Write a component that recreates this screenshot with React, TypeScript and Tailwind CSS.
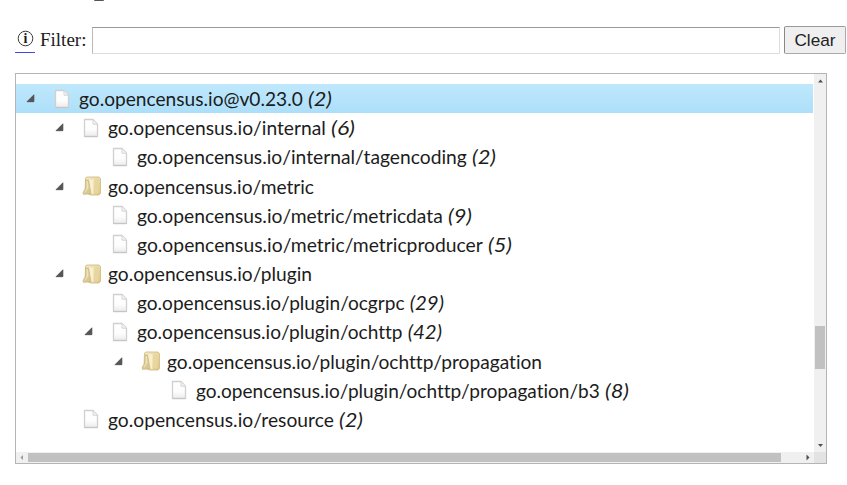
import React from 'react';

type Node = { depth: number; open?: boolean; folder?: boolean; name: string; count?: number; selected?: boolean; width: number };

const rows: Node[] = [
  { depth: 0, open: true, name: 'go.opencensus.io@v0.23.0', count: 2, selected: true, width: 253 },
  { depth: 1, open: true, name: 'go.opencensus.io/internal', count: 6, width: 247 },
  { depth: 2, name: 'go.opencensus.io/internal/tagencoding', count: 2, width: 359 },
  { depth: 1, open: true, folder: true, name: 'go.opencensus.io/metric', width: 206 },
  { depth: 2, name: 'go.opencensus.io/metric/metricdata', count: 9, width: 335 },
  { depth: 2, name: 'go.opencensus.io/metric/metricproducer', count: 5, width: 375 },
  { depth: 1, open: true, folder: true, name: 'go.opencensus.io/plugin', width: 204 },
  { depth: 2, name: 'go.opencensus.io/plugin/ocgrpc', count: 29, width: 307 },
  { depth: 2, open: true, name: 'go.opencensus.io/plugin/ochttp', count: 42, width: 305 },
  { depth: 3, open: true, folder: true, name: 'go.opencensus.io/plugin/ochttp/propagation', width: 375 },
  { depth: 4, name: 'go.opencensus.io/plugin/ochttp/propagation/b3', count: 8, width: 433 },
  { depth: 1, name: 'go.opencensus.io/resource', count: 2, width: 255 },
];

function PageIcon() {
  return (
    <svg width="16" height="20" viewBox="0 0 16 20" className="block">
      <defs>
        <linearGradient id="paper" x1="0" y1="0" x2="0" y2="1">
          <stop offset="0" stopColor="#ffffff" />
          <stop offset="0.6" stopColor="#fdfdfd" />
          <stop offset="1" stopColor="#ebebeb" />
        </linearGradient>
      </defs>
      <path d="M1.5 1.5H10L14.5 6.2V18.5H1.5Z" fill="url(#paper)" stroke="#d0d0d0" strokeWidth="1.3" strokeLinejoin="round" />
      <path d="M10 1.8V6.2H14.3" fill="#f4f4f4" stroke="#d4d4d4" />
      <path d="M1.5 18.5H14.5" stroke="#c5c5c5" />
    </svg>
  );
}

function FolderIcon() {
  return (
    <svg width="20" height="20" viewBox="0 0 20 20" className="block">
      <defs>
        <linearGradient id="manila" x1="0" y1="0" x2="1" y2="1">
          <stop offset="0" stopColor="#f5ebc8" />
          <stop offset="1" stopColor="#dcc588" />
        </linearGradient>
      </defs>
      <path d="M3.5 2L5 1H17L18.5 2.5V17.5L17 19H9L3 17Z" fill="url(#manila)" stroke="#d3bf86" strokeWidth="0.9" strokeLinejoin="round" />
      <path d="M12.5 3H16.5V16.5L12.5 18Z" fill="#e8d69e" />
      <path d="M7 3.5H11.5V18.5L8.5 17Z" fill="#f8efd0" />
      <path d="M4 4H6.5L9 17.5L1.5 18.5L1 16.5L3.5 12.5Z" fill="#d9c78f" stroke="#c8b57c" strokeWidth="0.6" strokeLinejoin="round" />
      <path d="M4.5 5H6L6.5 12L3.5 16.5H2.5L4.5 12.5Z" fill="#eee2ba" />
    </svg>
  );
}

function Label({ node }: { node: Node }) {
  const countWidth = node.count === undefined ? 0 : node.count > 9 ? 34.3 : 24;
  const nameWidth = node.count === undefined ? node.width : node.width - countWidth - 5.2;
  return (
    <svg width={node.width + 6} height="29" className="block shrink-0 overflow-visible fill-[#1c1c1c] font-[Lato,sans-serif] text-[19px] [font-variant-ligatures:none]">
      <text x="0" y="21.6" textLength={nameWidth} lengthAdjust="spacingAndGlyphs">{node.name}</text>
      {node.count !== undefined && (
        <text x={node.width - countWidth} y="21.6" textLength={countWidth} lengthAdjust="spacingAndGlyphs" className="italic">{`(${node.count})`}</text>
      )}
    </svg>
  );
}

function Row({ node }: { node: Node }) {
  return (
    <div className={'flex h-[29.18px] items-center ' + (node.selected ? 'bg-linear-to-b from-[#bfe8fc] to-[#addffa]' : '')}>
      <div className="shrink-0" style={{ width: node.depth * 29.2 }} />
      <div className="w-[37px] shrink-0 pl-[10px]">
        {node.open && (
          <svg width="9" height="9" viewBox="0 0 9 9" className="block">
            <path d="M7.9 0.8V7.7H1Z" fill="#555" stroke="#424242" strokeWidth="0.7" strokeLinejoin="round" />
          </svg>
        )}
      </div>
      <div className={'flex w-[26px] shrink-0 ' + (node.folder ? '' : 'pl-px')}>
        {node.folder ? <FolderIcon /> : <PageIcon />}
      </div>
      <Label node={node} />
    </div>
  );
}

function Arrow({ d, color = '#505050' }: { d: string; color?: string }) {
  return (
    <svg width="11" height="11" viewBox="0 0 11 11" className="block shrink-0">
      <path d={d} fill={color} />
    </svg>
  );
}

export default function App() {
  return (
    <div className="flex h-[485px] w-[847px] flex-col overflow-hidden bg-white text-black">
      <div className="ml-[94px] h-px w-[10px] shrink-0 rounded-b-full bg-[#555]" />
      <div className="mt-[25px] flex h-[28px] shrink-0 items-start pl-[15px]">
        <a className="flex h-[27px] w-5 justify-center border-b border-[#4545ee] pt-[4px]">
          <svg width="17" height="17" viewBox="0 0 17 17">
            <circle cx="8.5" cy="8.5" r="7.3" fill="none" stroke="#3a3a3a" strokeWidth="1" />
            <text x="8.5" y="13" textAnchor="middle" className="fill-[#1c1c1c] font-['Liberation_Serif',serif] text-[14px] font-bold">i</text>
          </svg>
        </a>
        <label className="w-[57px] pl-[5px] font-['Liberation_Serif',serif] text-[19px] leading-[27px] text-[#1c1c1c]">Filter:</label>
        <input aria-label="Filter" className="mt-px h-[27px] w-[688px] shrink-0 border border-[#ddd] border-l-[#bbb] border-t-[#999] bg-white outline-none" />
        <button className="ml-1 h-[28px] w-[62px] shrink-0 rounded-[2px] border border-[#aaa] border-l-[#888] border-t-[#999] bg-[#efefef] font-['Liberation_Sans',sans-serif] text-[17.2px] leading-[26px] text-[#222]">Clear</button>
      </div>
      <div className="ml-[15px] mt-[19px] flex h-[391px] w-[812px] shrink-0 flex-col border border-[#b5b5b5]">
        <div className="flex min-h-0 flex-1">
          <div className="w-[798px] shrink-0 pt-[10px]">
            <div className="w-[797px]">
              {rows.map((node) => <Row key={node.name} node={node} />)}
            </div>
          </div>
          <div className="flex w-3 flex-col items-center bg-[#f0f0f0]">
            <Arrow d="M3 8.5L5.5 5.5L8 8.5Z" />
            <div className="mt-[241px] h-[43px] w-[10px] shrink-0 bg-[#c1c1c1]" />
            <div className="mt-auto"><Arrow d="M3 3L5.5 6L8 3Z" /></div>
          </div>
        </div>
        <div className="flex h-[11px] shrink-0 items-center bg-[#f0f0f0]">
          <Arrow d="M7 3L4.5 5.5L7 8Z" color="#999" />
          <div className="ml-px h-[9px] w-[753px] bg-[#c1c1c1]" />
          <div className="ml-auto flex w-[10px]"><Arrow d="M2.5 2.5L5.5 5.5L2.5 8.5Z" /></div>
          <div className="h-full w-3 bg-[#e3e3e3]" />
        </div>
      </div>
    </div>
  );
}
